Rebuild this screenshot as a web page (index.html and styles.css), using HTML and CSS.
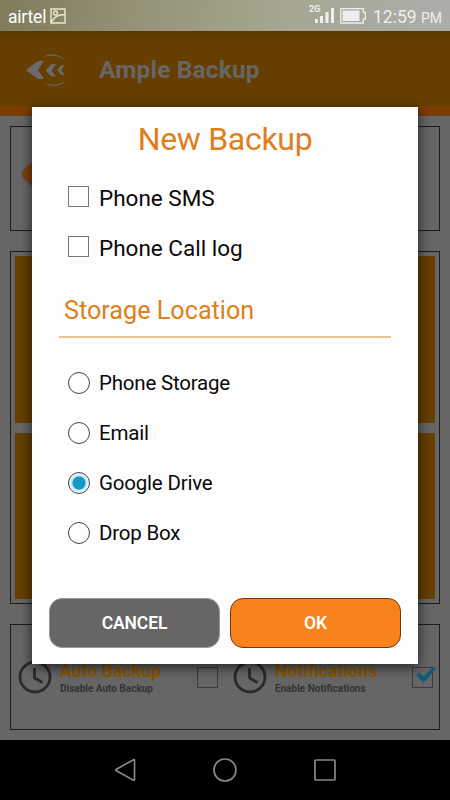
FILE: index.html
```
<!DOCTYPE html>
<html lang="en">
<head>
    <meta charset="UTF-8">
    <meta name="viewport" content="width=device-width, initial-scale=1.0">
    <title>Ample Backup</title>
    <link rel="stylesheet" href="styles.css">
</head>
<body>
    <div class="status-bar">
        <span class="carrier">airtel</span>
        <svg class="picture-icon" width="16" height="16" viewBox="0 0 16 16">
            <path d="M1 1h14v14H1zM1.500 14C4 9 8 6.500 14.500 6.500" />
            <circle cx="5.500" cy="5" r="2" />
        </svg>
        <div class="status-right">
            <svg class="signal" width="26" height="22" viewBox="0 0 26 22">
                <text class="network" x="0" y="8">2G</text>
                <path fill="#eee" d="M6 15h3v4H6zM11 12h3v7h-3zM16.500 8h3v11h-3zM22 4h3v15h-3z" />
            </svg>
            <svg class="battery" width="26" height="16" viewBox="0 0 26 16">
                <path fill="none" stroke="#eee" stroke-width="1.300" d="M.700.700h22.600v3.800h2v6.500h-2v4H.700z" />
                <path fill="#eee" d="M2.500 2.500h17v10.500h-17z" />
            </svg>
            <span class="clock">12:59 <small>PM</small></span>
        </div>
    </div>

    <div class="header">
        <svg class="logo" width="42" height="36" viewBox="0 0 42 36">
            <path fill="#6b6b6b" d="M0 18L12 9h6l-6 9 6 9h-6zM19.500 18.500l6-6.500h4.500l-4.500 6.500 4.500 6h-4.500zM31 18l4.500-5h3l-3.500 5 3.500 5h-3z" />
            <path fill="#666" d="M17 5C24 0 34 2 39 8 32 3.500 25 2.500 17 5zM18 30c6 4 15 4 22-2-5 7-16 8-22 2z" />
        </svg>
        <h1>Ample Backup</h1>
    </div>

    <div class="page">
        <div class="panel banner">
            <svg width="40" height="40" viewBox="0 0 40 40">
                <path fill="#7a420f" d="M2 15L16 3h20v34H16L2 25q-4-5 0-10z" />
            </svg>
        </div>
        <div class="panel tiles">
            <div class="tile"></div>
            <div class="tile"></div>
        </div>
        <div class="panel options">
            <div class="option">
                <svg class="clock-icon" width="34" height="34" viewBox="0 0 34 34">
                    <circle cx="17" cy="17" r="15" />
                    <path d="M16.500 8v10l8 4.500" />
                </svg>
                <div class="option-text">
                    <h3>Auto Backup</h3>
                    <p>Disable Auto Backup</p>
                </div>
                <div class="option-box"></div>
            </div>
            <div class="option">
                <svg class="clock-icon" width="34" height="34" viewBox="0 0 34 34">
                    <circle cx="17" cy="17" r="15" />
                    <path d="M16.500 8v10l8 4.500" />
                </svg>
                <div class="option-text">
                    <h3>Notifications</h3>
                    <p>Enable Notifications</p>
                </div>
                <div class="option-box">
                    <svg class="tick" width="22" height="18" viewBox="0 0 22 18">
                        <path fill="#0c5f7a" d="M1 9l3.500-2.500 4 4L18 1l3 1.500L8.500 17z" />
                    </svg>
                </div>
            </div>
        </div>
    </div>

    <div class="nav-bar">
        <svg width="24" height="24" viewBox="0 0 24 24"><path d="M21.500 2v20a1 1 0 0 1-1 .300L3 12.500v-1L20.500 1.700a1 1 0 0 1 1 .300z" /></svg>
        <svg width="24" height="24" viewBox="0 0 24 24"><circle cx="12" cy="12" r="11" /></svg>
        <svg width="24" height="24" viewBox="0 0 24 24"><rect x="2" y="2" width="20" height="20" rx="1" /></svg>
    </div>

    <div class="dialog">
        <h2>New Backup</h2>
        <div class="checks">
            <label class="row"><i class="box"></i><span>Phone SMS</span></label>
            <label class="row"><i class="box"></i><span>Phone Call log</span></label>
        </div>
        <div class="section">Storage Location</div>
        <div class="radios">
            <label class="row"><i class="radio"></i><span>Phone Storage</span></label>
            <label class="row"><i class="radio"></i><span>Email</span></label>
            <label class="row"><i class="radio checked"></i><span>Google Drive</span></label>
            <label class="row"><i class="radio"></i><span>Drop Box</span></label>
        </div>
        <div class="buttons">
            <div class="button cancel">CANCEL</div>
            <div class="button ok">OK</div>
        </div>
    </div>
</body>
</html>
```
FILE: styles.css
```
* {
    box-sizing: border-box;
}
body {
    font-family: Roboto, sans-serif;
    margin: 0;
    width: 450px;
    height: 800px;
    overflow: hidden;
    background: #666;
}
h1, h2, h3, p {
    margin: 0;
}
svg {
    display: block;
    flex: none;
}
span, h1, h3, p {
    white-space: nowrap;
}
.status-bar {
    height: 31px;
    display: flex;
    align-items: center;
    padding: 2px 8px 0;
    color: #fff;
    background: linear-gradient(100deg, #7f7b5c, #97957b 35%, #a5a58f 60%, #adaeab);
}
.carrier {
    font-size: 17.500px;
    letter-spacing: -0.200px;
    width: 42px;
}
.picture-icon {
    fill: none;
    stroke: #eee8d0;
    stroke-width: 1.400;
    margin-bottom: 1px;
}
.status-right {
    margin-left: auto;
    display: flex;
    align-items: center;
}
.signal {
    margin-bottom: 3px;
}
.network {
    font-size: 9px;
    font-weight: bold;
    fill: #eee;
}
.battery {
    margin: 0 7px 2px 5px;
}
.clock {
    font-size: 17.500px;
    color: #eee;
}
.clock small {
    font-size: 14px;
}
.header {
    height: 85px;
    display: flex;
    align-items: center;
    padding: 2px 0 0 26px;
    background: linear-gradient(#5c3900, #663f00 10px);
    border-bottom: 10px solid #7b3d00;
}
.logo {
    margin-right: 31px;
}
h1 {
    font-size: 24.500px;
    letter-spacing: 0.150px;
    line-height: 28px;
    padding-top: 1px;
    color: #666;
}
.page {
    height: 624px;
    padding: 10px;
    display: flex;
    flex-direction: column;
    gap: 20px;
}
.panel {
    border: 1px solid #1c1c1c;
}
.banner {
    height: 105px;
    padding: 27px 11px;
}
.tiles {
    height: 353px;
    padding: 4px;
    display: flex;
    flex-direction: column;
    gap: 10px;
}
.tile {
    flex: 1;
    background: #663f00;
}
.options {
    height: 106px;
    display: flex;
    padding-left: 7px;
}
.option {
    width: 215px;
    display: flex;
    align-items: center;
    flex: none;
}
.clock-icon {
    fill: none;
    stroke: #2a2a2a;
    stroke-width: 2.800;
}
.option-text {
    width: 145px;
    padding: 4px 0 0 8px;
}
h3 {
    font-size: 17.700px;
    line-height: 20px;
    color: #8a5500;
}
.option-text p {
    font-size: 10px;
    font-weight: bold;
    line-height: 16px;
    color: #333;
}
.option-box {
    position: relative;
    width: 21px;
    height: 21px;
    border: 1px solid #3b3b3b;
}
.tick {
    position: absolute;
    left: 2px;
    top: -2px;
}
.nav-bar {
    height: 60px;
    background: #000;
    display: flex;
    justify-content: center;
    align-items: center;
    gap: 76px;
}
.nav-bar svg {
    fill: none;
    stroke: #888;
    stroke-width: 1.700;
}

/* dialog */
.dialog {
    position: absolute;
    left: 32px;
    top: 107px;
    width: 386px;
    height: 557px;
    background: #fdfdfd;
    box-shadow: 0 3px 12px rgba(0, 0, 0, 0.7);
    color: #0a0a0a;
}
h2 {
    font-size: 32px;
    letter-spacing: -0.300px;
    font-weight: normal;
    line-height: 64px;
    text-align: center;
    color: #df7f1b;
}
.row {
    display: flex;
    align-items: center;
    height: 50px;
    padding-left: 36px;
}
.row span {
    font-size: 20.500px;
    letter-spacing: -0.200px;
}
.checks {
    height: 110px;
}
.checks .row span {
    font-size: 22.500px;
    letter-spacing: 0;
    padding-top: 3px;
}
.box {
    width: 21px;
    height: 21px;
    border: 1px solid #777;
    margin-right: 10px;
}
.radio {
    width: 22px;
    height: 22px;
    border: 1px solid #444;
    border-radius: 50%;
    margin-right: 9px;
}
.checked {
    background: radial-gradient(circle, #1597c8 0 6px, #bfe6f3 7px, #e3f4fa 9px, #fff 10px);
}
.section {
    height: 57px;
    margin: 0 27px 20px;
    padding-left: 5px;
    border-bottom: 2px solid #ecc394;
    color: #df7f1b;
    font-size: 25.200px;
    line-height: 59px;
}
.buttons {
    display: flex;
    gap: 10px;
    padding: 40px 17px 0;
}
.button {
    width: 171px;
    height: 50px;
    border-radius: 13px;
    color: #fff;
    font-size: 17.500px;
    font-weight: 600;
    letter-spacing: -0.100px;
    line-height: 49px;
    text-align: center;
}
.cancel {
    background: #666;
    border: 1px solid #999;
}
.ok {
    background: #f8821b;
    border: 1px solid #7a3510;
}
```
